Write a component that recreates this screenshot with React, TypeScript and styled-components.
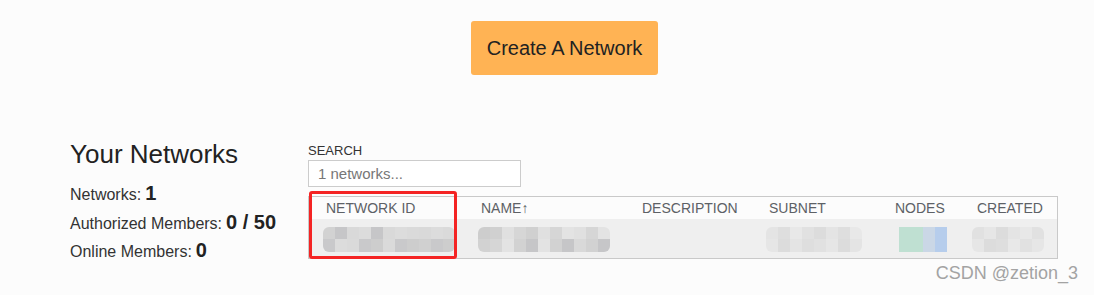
import styled, { createGlobalStyle } from "styled-components";

const GlobalStyle = createGlobalStyle`
  html, body {
    margin: 0;
    background: #fcfcfc;
    font-family: "Liberation Sans", Arial, sans-serif;
    color: #333;
  }
`;

const Page = styled.div`
  position: relative;
  width: 1094px;
  height: 295px;
  overflow: hidden;
`;

const TopBar = styled.div`
  display: flex;
  justify-content: center;
  padding: 21px 0 0 35px;
`;

const CreateButton = styled.button`
  width: 187px;
  height: 54px;
  border: none;
  border-radius: 3px;
  background: #ffb354;
  color: #222;
  font-family: inherit;
  font-size: 20px;
  cursor: pointer;
`;

const Main = styled.div`
  display: flex;
  padding: 64px 0 0 70px;
`;

const Summary = styled.div`
  width: 238px;
  flex-shrink: 0;
`;

const Title = styled.h2`
  margin: 0 0 13px;
  font-size: 26px;
  line-height: 30px;
  font-weight: 400;
  color: #222;
`;

const Stat = styled.div`
  display: flex;
  align-items: baseline;
  height: 28.5px;
  font-size: 16px;
  color: #333;
`;

const StatValue = styled.b`
  margin-left: 4px;
  font-size: 20px;
  color: #222;
`;

const ListArea = styled.div`
  width: 750px;
  padding-top: 4px;
`;

const SearchLabel = styled.label`
  display: block;
  font-size: 13px;
  line-height: 15px;
  color: #333;
  margin-bottom: 2px;
`;

const SearchInput = styled.input`
  box-sizing: border-box;
  display: block;
  width: 213px;
  height: 27px;
  padding: 0 9px;
  border: 1px solid #ccc;
  background: #fff;
  font-family: inherit;
  font-size: 15px;
  &::placeholder {
    color: #777;
  }
`;

const TableWrap = styled.div`
  position: relative;
  margin-top: 9px;
`;

const Table = styled.div`
  border: 1px solid #c9c9c9;
`;

const Row = styled.div<{ $body?: boolean }>`
  display: grid;
  grid-template-columns: 155px 161px 127px 126px 82px 1fr;
  align-items: center;
  height: ${(p) => (p.$body ? "39px" : "22px")};
  background: ${(p) => (p.$body ? "#efefef" : "#fcfcfc")};
`;

const HeadCell = styled.div`
  padding-left: 17px;
  font-size: 14px;
  line-height: 22px;
  color: #5d6166;
  text-transform: uppercase;
`;

const Cell = styled.div<{ $pad: number }>`
  display: flex;
  padding-left: ${(p) => p.$pad}px;
  padding-top: 1px;
`;

const Mosaic = styled.div<{ $cols: number; $square?: boolean }>`
  display: grid;
  grid-template-columns: repeat(${(p) => p.$cols}, 12px);
  grid-auto-rows: 12.5px;
  border-radius: ${(p) => (p.$square ? "0" : "6px")};
  overflow: hidden;
  filter: blur(${(p) => (p.$square ? "0.3px" : "0.6px")});
`;

const Tile = styled.div<{ $c: string; $tall?: boolean }>`
  background: ${(p) => p.$c};
  grid-row: ${(p) => (p.$tall ? "span 2" : "auto")};
`;

const Highlight = styled.div`
  position: absolute;
  left: 1px;
  top: -5px;
  width: 148px;
  height: 68px;
  box-sizing: border-box;
  border: 3px solid #f42424;
  border-radius: 3px;
  pointer-events: none;
`;

const Watermark = styled.div`
  position: absolute;
  right: 16px;
  bottom: 11px;
  font-size: 18px;
  color: #a3a3a3;
`;

const greys = ["#d6d6d6", "#cdcdcd", "#dcdcdc", "#d2d2d2", "#e0e0e0", "#c9c9cb", "#d9d9d9", "#e3e3e3", "#d0d0d0", "#dadada", "#c6c6c8"];

const lightGreys = ["#e4e4e4", "#dedede", "#e8e8e8", "#e1e1e1", "#e6e6e6", "#dcdcdc"];

const tiles = (n: number, seed: number, palette = greys) =>
  Array.from({ length: n }, (_, i) => palette[(i * 7 + seed * 3 + (i >> 2)) % palette.length]);

const MosaicBlock = ({ cols, seed, palette }: { cols: number; seed: number; palette?: string[] }) => (
  <Mosaic $cols={cols}>
    {tiles(cols * 2, seed, palette).map((c, i) => (
      <Tile key={i} $c={c} />
    ))}
  </Mosaic>
);

const headers = ["Network ID", "Name↑", "Description", "Subnet", "Nodes", "Created"];

export default function App() {
  return (
    <Page>
      <GlobalStyle />
      <TopBar>
        <CreateButton>Create A Network</CreateButton>
      </TopBar>
      <Main>
        <Summary>
          <Title>Your Networks</Title>
          <Stat>
            Networks:<StatValue>1</StatValue>
          </Stat>
          <Stat>
            Authorized Members:<StatValue>0 / 50</StatValue>
          </Stat>
          <Stat>
            Online Members:<StatValue>0</StatValue>
          </Stat>
        </Summary>
        <ListArea>
          <SearchLabel>SEARCH</SearchLabel>
          <SearchInput placeholder="1 networks..." />
          <TableWrap>
            <Table>
              <Row>
                {headers.map((h) => (
                  <HeadCell key={h}>{h}</HeadCell>
                ))}
              </Row>
              <Row $body>
                <Cell $pad={14}>
                  <MosaicBlock cols={11} seed={1} />
                </Cell>
                <Cell $pad={14}>
                  <MosaicBlock cols={11} seed={4} />
                </Cell>
                <Cell $pad={0} />
                <Cell $pad={14}>
                  <MosaicBlock cols={8} seed={2} palette={lightGreys} />
                </Cell>
                <Cell $pad={21}>
                  <Mosaic $cols={4} $square>
                    <Tile $c="#bfe0d2" $tall />
                    <Tile $c="#bfe0d2" $tall />
                    <Tile $c="#cad7e6" $tall />
                    <Tile $c="#b6cdec" $tall />
                  </Mosaic>
                </Cell>
                <Cell $pad={12}>
                  <MosaicBlock cols={6} seed={3} palette={lightGreys} />
                </Cell>
              </Row>
            </Table>
            <Highlight />
          </TableWrap>
        </ListArea>
      </Main>
      <Watermark>CSDN @zetion_3</Watermark>
    </Page>
  );
}
